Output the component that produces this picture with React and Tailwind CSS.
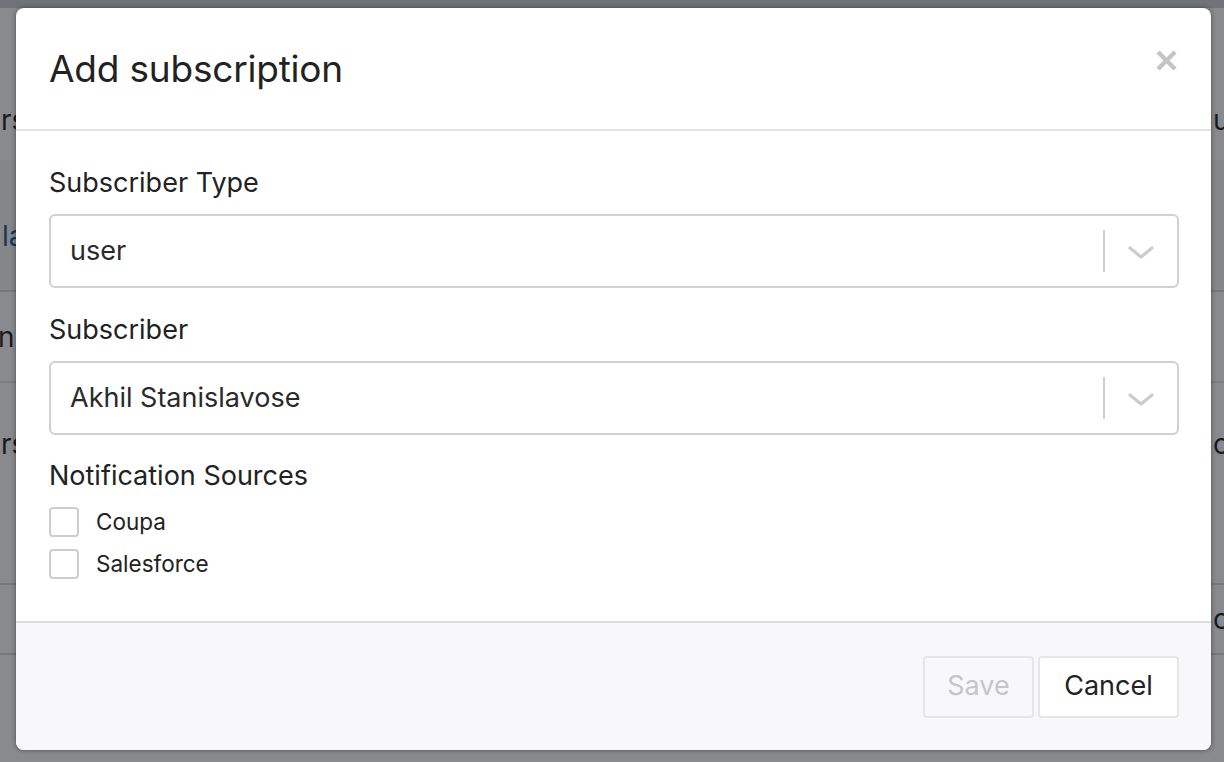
import React from "react";

function Chevron() {
  return (
    <svg width="26" height="14" viewBox="0 0 26 14" fill="none">
      <path d="M2 2 L13 11 L24 2" stroke="#cccccc" strokeWidth="3.2" strokeLinecap="round" strokeLinejoin="round" />
    </svg>
  );
}

function Select({ value }) {
  return (
    <div className="flex h-[74px] w-full items-center rounded-[6px] border-2 border-[#d0d0d0] bg-white">
      <div className="flex-1 pl-[19px] text-[27px] text-[#2a2a2a]">{value}</div>
      <div className="h-[42px] w-[2px] bg-[#cfcfcf]" />
      <div className="flex w-[72px] items-center justify-center pt-[4px]">
        <Chevron />
      </div>
    </div>
  );
}

function Check({ label }) {
  return (
    <div className="flex h-[30px] items-center gap-[17px]">
      <div className="h-[30px] w-[30px] rounded-[4px] border-2 border-[#cdcdcd] bg-white" />
      <span className="text-[22.5px] leading-[30px] text-[#222]">{label}</span>
    </div>
  );
}

function LeftFrag({ text, className = "" }) {
  return (
    <div className={"whitespace-nowrap " + className}>
      <span>{text}</span>
    </div>
  );
}

function RightFrag({ text, className = "" }) {
  return (
    <div className={"flex w-[13px] justify-start overflow-visible whitespace-nowrap " + className}>
      <span>{text}</span>
    </div>
  );
}

export default function App() {
  return (
    <div className="relative h-[762px] w-[1224px] overflow-hidden bg-white" style={{ fontFamily: "Inter, 'Noto Sans', sans-serif" }}>
      {/* background page */}
      <div className="flex h-full flex-col text-[28px] text-[#1f1f1f]">
        <div className="h-[8px] bg-[#d0d0d4]" />
        <div className="flex h-[152px] items-center justify-between pt-[72px]">
          <LeftFrag text="Users" className="-ml-[51px]" />
          <RightFrag text="u" className="-mr-[2px]" />
        </div>
        <div className="flex h-[132px] items-center justify-between border-b-2 border-[#d8d8d8] bg-[#f7f7f7] pt-[22px]">
          <LeftFrag text="la" className="ml-[2px] text-[#1e5a8c]" />
          <span />
        </div>
        <div className="flex h-[91px] items-center justify-between border-b-2 border-[#e4e4e4]">
          <LeftFrag text="n" className="-ml-[2px]" />
          <span />
        </div>
        <div className="flex h-[202px] items-start justify-between border-b-2 border-[#d8d8d8] pt-[40px]">
          <LeftFrag text="Users" className="-ml-[51px]" />
          <RightFrag text="oo" className="-mr-[2px]" />
        </div>
        <div className="flex h-[70px] items-center justify-between border-b-2 border-[#d8d8d8]">
          <span />
          <RightFrag text="cc" className="-mr-[2px]" />
        </div>
        <div className="flex-1" />
      </div>

      {/* overlay */}
      <div className="absolute inset-0 bg-[rgba(20,22,30,0.5)]" />

      {/* modal */}
      <div className="absolute left-[16px] top-[8px] flex h-[742px] w-[1195px] flex-col overflow-hidden rounded-[8px] bg-white shadow-[0_0_5px_rgba(0,0,0,0.45)]">
        <div className="flex h-[123px] shrink-0 items-center justify-between border-b-2 border-[#e3e3e6] pl-[33px] pr-[33px]">
          <h1 className="text-[37px] font-normal leading-none tracking-[-0.2px] text-[#222]">Add subscription</h1>
          <svg width="23" height="23" viewBox="0 0 23 23" className="-mt-[16px]">
            <path d="M3 3 L20 20 M20 3 L3 20" stroke="#c4c4c4" strokeWidth="4.4" strokeLinecap="butt" />
          </svg>
        </div>

        <div className="flex flex-1 flex-col pl-[33px] pr-[32px] pt-[36px]">
          <label className="mb-[15px] text-[27px] leading-[32px] text-[#222]">Subscriber Type</label>
          <Select value="user" />
          <label className="mb-[15px] mt-[26px] text-[27px] leading-[32px] text-[#222]">Subscriber</label>
          <Select value="Akhil Stanislavose" />
          <label className="mb-[15px] mt-[25px] text-[27px] leading-[32px] text-[#222]">Notification Sources</label>
          <div className="flex flex-col gap-[12px]">
            <Check label="Coupa" />
            <Check label="Salesforce" />
          </div>
        </div>

        <div className="flex h-[129px] shrink-0 items-center justify-end gap-[4px] border-t-2 border-[#dcdde0] bg-[#f8f8fb] pr-[32px]">
          <button className="h-[62px] w-[111px] rounded-[4px] border-2 border-[#e6e6e8] bg-[#f8f8fa] text-[27px] text-[#c6c6c6]">Save</button>
          <button className="h-[62px] w-[141px] rounded-[4px] border-2 border-[#e6e6e8] bg-white text-[27px] text-[#222]">Cancel</button>
        </div>
      </div>
    </div>
  );
}
